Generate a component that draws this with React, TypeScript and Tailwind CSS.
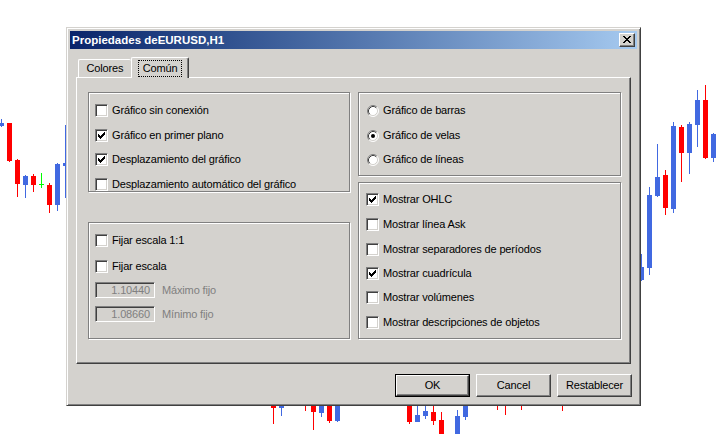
import React from "react";

const R = "#ff0000";
const B = "#4169e1";

// [bodyLeft, bodyTop, bodyBottom, wickTop, wickBottom, colour]
type Candle = [number, number, number, number, number, string];

const candles: Candle[] = [
  // left of the dialog
  [-1, 123, 126, 119, 127, B],
  [7, 123, 161, 123, 162, R],
  [15, 160, 184, 159, 197, R],
  [23, 176, 185, 175, 198, B],
  [31, 176, 185, 174, 192, R],
  [47, 185, 205, 183, 213, R],
  [55, 164, 205, 163, 211, B],
  [63, 163, 166, 125, 198, B],
  // right of the dialog
  [639, 267, 280, 254, 281, B],
  [647, 195, 268, 187, 275, B],
  [655, 177, 196, 144, 197, B],
  [663, 175, 208, 170, 215, R],
  [671, 126, 209, 122, 213, B],
  [679, 127, 153, 125, 182, R],
  [687, 124, 153, 122, 174, B],
  [695, 100, 125, 90, 147, B],
  [703, 100, 158, 85, 159, R],
  [711, 134, 158, 133, 162, B],
  // under the dialog
  [271, 400, 408, 400, 424, R],
  [279, 400, 408, 400, 416, B],
  [303, 400, 400, 400, 411, R],
  [311, 400, 412, 400, 430, R],
  [319, 400, 413, 400, 417, B],
  [327, 400, 421, 400, 423, R],
  [335, 400, 421, 400, 422, B],
  [407, 400, 422, 400, 424, R],
  [415, 415, 422, 400, 422, B],
  [423, 411, 416, 400, 419, B],
  [431, 412, 421, 400, 425, R],
  [439, 420, 440, 412, 440, R],
  [455, 416, 440, 410, 440, B],
  [463, 400, 417, 400, 420, B],
  [495, 400, 400, 400, 410, R],
  [503, 400, 400, 400, 415, R],
  [519, 400, 400, 400, 410, R],
  [560, 400, 400, 400, 411, R],
];

function Chart() {
  return (
    <svg className="absolute inset-0" width={718} height={434} shapeRendering="crispEdges">
      {candles.map(([x, bt, bb, wt, wb, col], i) => (
        <g key={i} fill={col}>
          <rect x={x + 2} y={wt} width={1} height={wb - wt} />
          {bb > bt && <rect x={x} y={bt} width={5} height={bb - bt} />}
        </g>
      ))}
      <g fill="#00ff00">
        <rect x={39} y={184} width={5} height={1} />
        <rect x={41} y={173} width={1} height={15} />
      </g>
    </svg>
  );
}

const tick = ["......X", ".....XX", "X...XXX", "XX.XXX.", "XXXXX..", ".XXX...", "..X...."];
const cross = ["XX....XX", ".XX..XX.", "..XXXX..", "...XX...", "..XXXX..", ".XX..XX.", "XX....XX"];

function Pixels({ rows, className }: { rows: string[]; className: string }) {
  return (
    <svg className={className} width={rows[0].length} height={rows.length} shapeRendering="crispEdges">
      {rows.flatMap((row, y) =>
        row.split("").map((c, x) => (c === "X" ? <rect key={`${x}-${y}`} x={x} y={y} width={1} height={1} fill="#000" /> : null))
      )}
    </svg>
  );
}

function Checkbox({ on }: { on?: boolean }) {
  return (
    <span className="relative block w-[13px] h-[13px] shrink-0 bg-white border border-t-[#808080] border-l-[#808080] border-b-white border-r-white shadow-[inset_1px_1px_0_#404040,inset_-1px_-1px_0_#d4d2ce]">
      {on && <Pixels rows={tick} className="absolute left-[2px] top-[2px]" />}
    </span>
  );
}

function Radio({ on }: { on?: boolean }) {
  return (
    <svg width={12} height={12} viewBox="0 0 12 12" className="shrink-0">
      <circle cx={6} cy={6} r={5} fill="#fff" />
      <path d="M2.11 9.89 A5.5 5.5 0 0 1 9.89 2.11" fill="none" stroke="#808080" />
      <path d="M9.89 2.11 A5.5 5.5 0 0 1 2.11 9.89" fill="none" stroke="#fff" />
      <path d="M2.82 9.18 A4.5 4.5 0 0 1 9.18 2.82" fill="none" stroke="#404040" />
      <path d="M9.18 2.82 A4.5 4.5 0 0 1 2.82 9.18" fill="none" stroke="#d4d2ce" />
      {on && <circle cx={6} cy={6} r={2} fill="#000" />}
    </svg>
  );
}

function CheckRow({ label, on, className }: { label: string; on?: boolean; className?: string }) {
  return (
    <div className={`flex items-center gap-[4px] h-[13px] ${className ?? ""}`}>
      <Checkbox on={on} />
      <span className="whitespace-nowrap">{label}</span>
    </div>
  );
}

function RadioRow({ label, on, className }: { label: string; on?: boolean; className?: string }) {
  return (
    <div className={`flex items-center gap-[4px] h-[13px] ${className ?? ""}`}>
      <Radio on={on} />
      <span className="whitespace-nowrap">{label}</span>
    </div>
  );
}

function FixedField({ value, label }: { value: string; label: string }) {
  return (
    <div className="flex items-center gap-[7px]">
      <div className="w-[60px] h-[16px] flex items-center justify-end pr-[4px] text-[#808080] border border-t-[#808080] border-l-[#808080] border-b-white border-r-white shadow-[inset_1px_1px_0_#404040,inset_-1px_-1px_0_#d4d2ce]">
        {value}
      </div>
      <span className="text-[#808080] whitespace-nowrap">{label}</span>
    </div>
  );
}

const groupBox = "border border-[#808080] shadow-[inset_1px_1px_0_#fff,1px_1px_0_#fff]";
const raised =
  "border border-t-white border-l-white border-r-[#404040] border-b-[#404040] shadow-[inset_-1px_-1px_0_#808080]";

function Button({ label, primary }: { label: string; primary?: boolean }) {
  if (primary) {
    return (
      <div className="w-[75px] h-[23px] border border-black">
        <div className={`w-full h-full flex items-center justify-center ${raised}`}>{label}</div>
      </div>
    );
  }
  return <div className={`w-[75px] h-[23px] flex items-center justify-center ${raised}`}>{label}</div>;
}

const ohlcRows = [
  { label: "Mostrar OHLC", on: true, mt: "" },
  { label: "Mostrar línea Ask", on: false, mt: "mt-[12px]" },
  { label: "Mostrar separadores de períodos", on: false, mt: "mt-[12px]" },
  { label: "Mostrar cuadrícula", on: true, mt: "mt-[11px]" },
  { label: "Mostrar volúmenes", on: false, mt: "mt-[11px]" },
  { label: "Mostrar descripciones de objetos", on: false, mt: "mt-[12px]" },
];

export default function App() {
  return (
    <div className="relative w-[718px] h-[434px] overflow-hidden bg-white text-black text-[11px] leading-[13px] tracking-[-0.15px] font-['Liberation_Sans',Arial,sans-serif]">
      <Chart />

      <div className="absolute left-[66px] top-[27px] w-[575px] h-[379px] flex flex-col p-[3px] bg-[#d4d2ce] border border-t-[#d4d2ce] border-l-[#d4d2ce] border-r-[#404040] border-b-[#404040] shadow-[inset_1px_1px_0_#fff,inset_-1px_-1px_0_#808080]">
        {/* title bar */}
        <div className="h-[18px] flex items-center justify-between px-[2px] bg-linear-to-r from-[#0a246a] to-[#a6caf0]">
          <span className="text-white font-bold text-[11.5px] tracking-normal whitespace-nowrap">Propiedades deEURUSD,H1</span>
          <div className={`relative w-[16px] h-[14px] bg-[#d4d2ce] ${raised}`}>
            <Pixels rows={cross} className="absolute left-[3px] top-[2px]" />
          </div>
        </div>

        {/* tabs */}
        <div className="mt-[8px] px-[6px]">
          <div className="flex items-end h-[20px] pl-[2px]">
            <div className="w-[53px] h-[18px] flex items-center justify-center rounded-t-[2px] border-t border-l border-white">
              Colores
            </div>
            <div className="relative z-10 w-[58px] h-[21px] -mb-px flex items-start justify-center pt-[2px] bg-[#d4d2ce] rounded-t-[2px] border-t border-l border-t-white border-l-white border-r border-r-[#404040] shadow-[inset_-1px_0_0_#808080]">
              <span className="h-[17px] px-[4px] flex items-center border border-dotted border-black">Común</span>
            </div>
          </div>

          <div className={`h-[287px] flex gap-[8px] pt-[14px] pl-[11px] ${raised}`}>
            <div className="flex flex-col gap-[30px]">
              <div className={`w-[262px] h-[100px] flex flex-col pt-[11px] pl-[6px] ${groupBox}`}>
                <CheckRow label="Gráfico sin conexión" />
                <CheckRow label="Gráfico en primer plano" on className="mt-[12px]" />
                <CheckRow label="Desplazamiento del gráfico" on className="mt-[11px]" />
                <CheckRow label="Desplazamiento automático del gráfico" className="mt-[12px]" />
              </div>
              <div className={`w-[262px] h-[117px] flex flex-col pt-[11px] pl-[6px] ${groupBox}`}>
                <CheckRow label="Fijar escala 1:1" />
                <CheckRow label="Fijar escala" className="mt-[13px]" />
                <div className="mt-[9px] flex flex-col gap-[8px]">
                  <FixedField value="1.10440" label="Máximo fijo" />
                  <FixedField value="1.08660" label="Mínimo fijo" />
                </div>
              </div>
            </div>

            <div className="flex flex-col gap-[6px]">
              <div className={`w-[263px] h-[84px] flex flex-col pt-[11px] pl-[8px] ${groupBox}`}>
                <RadioRow label="Gráfico de barras" />
                <RadioRow label="Gráfico de velas" on className="mt-[12px]" />
                <RadioRow label="Gráfico de líneas" className="mt-[11px]" />
              </div>
              <div className={`w-[263px] h-[157px] flex flex-col pt-[10px] pl-[7px] ${groupBox}`}>
                {ohlcRows.map((r) => (
                  <CheckRow key={r.label} label={r.label} on={r.on} className={r.mt} />
                ))}
              </div>
            </div>
          </div>
        </div>

        {/* buttons */}
        <div className="mt-[10px] flex justify-end gap-[6px] pr-[5px]">
          <Button label="OK" primary />
          <Button label="Cancel" />
          <Button label="Restablecer" />
        </div>
      </div>
    </div>
  );
}
